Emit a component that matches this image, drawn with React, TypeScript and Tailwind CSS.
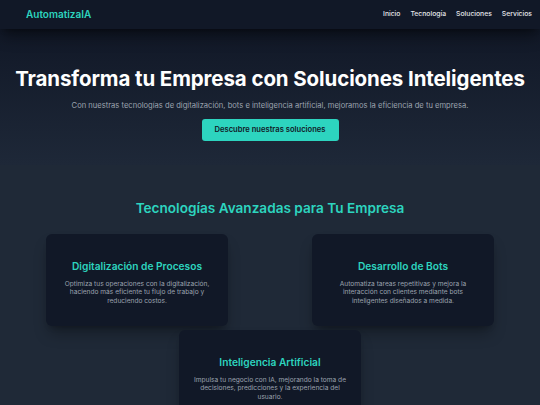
import React from 'react';

const links = ['Inicio', 'Tecnología', 'Soluciones', 'Servicios'];

const cards = [
  {
    title: 'Digitalización de Procesos',
    text: 'Optimiza tus operaciones con la digitalización, haciendo más eficiente tu flujo de trabajo y reduciendo costos.',
  },
  {
    title: 'Desarrollo de Bots',
    text: 'Automatiza tareas repetitivas y mejora la interacción con clientes mediante bots inteligentes diseñados a medida.',
  },
  {
    title: 'Inteligencia Artificial',
    text: 'Impulsa tu negocio con IA, mejorando la toma de decisiones, predicciones y la experiencia del usuario.',
  },
];

const Card: React.FC<{ title: string; text: string }> = ({ title, text }) => (
  <div className="w-[182px] h-[92px] bg-[#111827] rounded-md shadow-lg shadow-black/30 flex flex-col items-center justify-center px-[14px] pt-[8px] text-center">
    <h3 className="text-[10.2px] font-semibold text-[#2dd4bf] leading-none">{title}</h3>
    <p className="mt-[8px] text-[6.6px] leading-[8.8px] text-[#9ca3af]">{text}</p>
  </div>
);

export default function App() {
  return (
    <div className="w-[540px] h-[405px] overflow-hidden bg-[#1f2937] text-white" style={{ fontFamily: 'Inter, "Noto Sans", sans-serif' }}>
      <nav className="relative z-10 h-[29px] bg-[#111827] shadow-lg shadow-black/40 flex items-center justify-between pl-[26px] pr-[8px]">
        <span className="text-[10px] font-semibold text-[#2dd4bf]">AutomatizaIA</span>
        <ul className="flex gap-[10px] text-[6.8px] font-medium text-[#e5e7eb]">
          {links.map(l => (
            <li key={l}>{l}</li>
          ))}
        </ul>
      </nav>

      <header className="h-[136px] bg-gradient-to-b from-[#111827] to-[#1e2838] flex flex-col items-center pt-[40px]">
        <h1 className="text-[20.5px] font-bold leading-none tracking-[-0.1px]">Transforma tu Empresa con Soluciones Inteligentes</h1>
        <p className="mt-[10px] text-[7.6px] text-[#9ca3af]">
          Con nuestras tecnologías de digitalización, bots e inteligencia artificial, mejoramos la eficiencia de tu empresa.
        </p>
        <button className="mt-[8px] w-[137px] h-[22px] rounded-[3px] bg-[#2dd4bf] text-[7.6px] font-semibold text-[#111827]">
          Descubre nuestras soluciones
        </button>
      </header>

      <section className="pt-[37px] flex flex-col items-center">
        <h2 className="text-[13.6px] font-semibold text-[#2dd4bf] leading-none">Tecnologías Avanzadas para Tu Empresa</h2>
        <div className="mt-[18px] flex flex-wrap justify-center gap-x-[84px] gap-y-[4px] w-full">
          {cards.map(c => (
            <Card key={c.title} title={c.title} text={c.text} />
          ))}
        </div>
      </section>
    </div>
  );
}
